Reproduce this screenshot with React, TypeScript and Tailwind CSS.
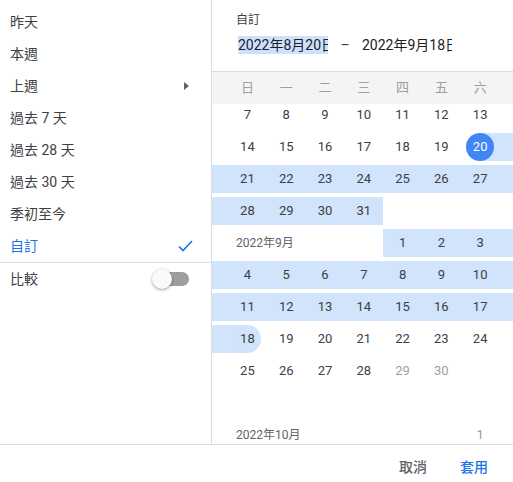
import clsx from "clsx";

type Month = 8 | 9 | 10;
type State = "none" | "in" | "start" | "end";

const FONT = "font-['Roboto','Noto_Sans_CJK_TC',sans-serif]";

const presets = ["昨天", "本週", "上週", "過去 7 天", "過去 28 天", "過去 30 天", "季初至今", "自訂"];
const weekdays = ["日", "一", "二", "三", "四", "五", "六"];

const stateOf = (m: Month, d: number | null): State => {
    if (d == null) return "none";
    if (m === 8 && d === 20) return "start";
    if (m === 9 && d === 18) return "end";
    if ((m === 8 && d > 20) || (m === 9 && d < 18)) return "in";
    return "none";
};

const isDisabled = (m: Month, d: number) => (m === 9 && d >= 29) || m === 10;

const range = (a: number, b: number) => Array.from({ length: b - a + 1 }, (_, i) => a + i);

interface RowDef {
    month: Month;
    days: (number | null)[];
    label?: string;
}

const rows: (RowDef | "gap")[] = [
    { month: 8, days: range(7, 13) },
    { month: 8, days: range(14, 20) },
    { month: 8, days: range(21, 27) },
    { month: 8, days: [28, 29, 30, 31, null, null, null] },
    { month: 9, days: [null, null, null, null, 1, 2, 3], label: "2022年9月" },
    { month: 9, days: range(4, 10) },
    { month: 9, days: range(11, 17) },
    { month: 9, days: range(18, 24) },
    { month: 9, days: [25, 26, 27, 28, 29, 30, null] },
    "gap",
    { month: 10, days: [null, null, null, null, null, null, 1], label: "2022年10月" },
];

function Cell({ month, day }: { month: Month; day: number | null }) {
    const s = stateOf(month, day);
    return (
        <div className="w-[38.8px] h-8 flex items-center shrink-0">
            <div
                className={clsx(
                    "w-full h-7 flex items-center justify-center text-[13px]",
                    s === "in" && "bg-[#d2e3fc]",
                    s === "start" && "bg-[linear-gradient(to_right,transparent_50%,#d2e3fc_50%)]",
                    s === "end" && "bg-[linear-gradient(to_right,#d2e3fc_50%,transparent_50%)]",
                    day != null && isDisabled(month, day) ? "text-[#9aa0a6]" : "text-[#3c4043]"
                )}
            >
                {s === "start" ? (
                    <span className="w-7 h-7 rounded-full bg-[#4285f4] text-white flex items-center justify-center">{day}</span>
                ) : s === "end" ? (
                    <span className="w-7 h-7 rounded-full bg-[#d2e3fc] flex items-center justify-center">{day}</span>
                ) : (
                    day
                )}
            </div>
        </div>
    );
}

function Pad({ on, wide }: { on: boolean; wide?: boolean }) {
    return (
        <div className={clsx("h-8 flex items-center", wide ? "flex-1" : "w-4 shrink-0")}>
            <div className={clsx("w-full h-7", on && "bg-[#d2e3fc]")} />
        </div>
    );
}

function WeekRow({ row }: { row: RowDef }) {
    const first = stateOf(row.month, row.days[0]);
    const last = stateOf(row.month, row.days[6]);
    const empty = row.days.findIndex((d) => d != null);
    return (
        <div className="flex h-8">
            {row.label ? (
                <div
                    className={clsx(
                        "h-8 flex items-center pl-6 text-xs text-[#5f6368] shrink-0",
                        empty === 4 ? "w-[171.2px]" : "w-[248.8px]"
                    )}
                >
                    {row.label}
                </div>
            ) : (
                <Pad on={first === "in" || first === "end"} />
            )}
            {row.days.slice(row.label ? empty : 0).map((d, i) => (
                <Cell key={i} month={row.month} day={d} />
            ))}
            <Pad wide on={last === "in" || last === "start"} />
        </div>
    );
}

function Toggle() {
    return (
        <div className="relative w-[34px] h-[14px] rounded-full bg-[#9e9e9e]">
            <div className="absolute -left-[3px] -top-[3px] w-5 h-5 rounded-full bg-[#fafafa] shadow-[0_1px_3px_rgba(0,0,0,0.4)]" />
        </div>
    );
}

export default function App() {
    return (
        <div className={clsx("w-[513px] h-[482px] flex flex-col overflow-hidden bg-white", FONT)}>
            <div className="flex h-[444px] shrink-0">
                {/* presets */}
                <div className="w-[212px] shrink-0 border-r border-[#dadce0] pt-[6px]">
                    {presets.map((p) => {
                        const active = p === "自訂";
                        return (
                            <div key={p} className="h-8 flex items-center justify-between pl-[10px] pr-[18px]">
                                <span className={clsx("text-sm", active ? "text-[#1a73e8]" : "text-[#3c4043]")}>{p}</span>
                                {p === "上週" && (
                                    <svg width="5" height="8" viewBox="0 0 5 8" className="mr-[4px]">
                                        <path d="M0 0 L5 4 L0 8 Z" fill="#5f6368" />
                                    </svg>
                                )}
                                {active && (
                                    <svg width="15" height="12" viewBox="0 0 15 12">
                                        <path d="M1 6.5 L5 10.5 L14 1" fill="none" stroke="#1a73e8" strokeWidth="1.6" />
                                    </svg>
                                )}
                            </div>
                        );
                    })}
                    <div className="h-[33px] flex items-center justify-between pl-[10px] pr-[22px] border-t border-[#dadce0]">
                        <span className="text-sm text-[#3c4043]">比較</span>
                        <Toggle />
                    </div>
                </div>

                {/* calendar */}
                <div className="flex-1 flex flex-col min-w-0">
                    <div className="h-[72px] shrink-0 border-b border-[#dadce0] px-6 pt-3">
                        <div className="text-xs leading-4 text-[#3c4043]">自訂</div>
                        <div className="mt-2 flex items-center h-[18px] text-sm text-[#202124]">
                            <div className="w-[92px] overflow-hidden whitespace-nowrap pl-[2px]">
                                <span className="bg-[#cfe0fc] leading-[18px] inline-block">2022年8月20日</span>
                            </div>
                            <span className="w-[34px] text-center text-[#3c4043]">–</span>
                            <div className="w-[90px] overflow-hidden whitespace-nowrap">2022年9月18日</div>
                        </div>
                    </div>
                    <div className="h-8 shrink-0 bg-[#f4f4f4] flex pl-4">
                        {weekdays.map((w) => (
                            <div key={w} className="w-[38.8px] flex items-center justify-center text-[13px] text-[#9aa0a6]">
                                {w}
                            </div>
                        ))}
                    </div>
                    <div className="flex-1 overflow-hidden">
                        <div className="-mt-[5px]">
                            {rows.map((r, i) => (r === "gap" ? <div key={i} className="h-8" /> : <WeekRow key={i} row={r} />))}
                        </div>
                    </div>
                </div>
            </div>
            <div className="h-[38px] shrink-0 border-t border-[#dadce0] flex items-center justify-end gap-[33px] pr-[25px] pt-[6px]">
                <span className="text-sm font-medium text-[#5f6368]">取消</span>
                <span className="text-sm font-medium text-[#1a73e8]">套用</span>
            </div>
        </div>
    );
}
